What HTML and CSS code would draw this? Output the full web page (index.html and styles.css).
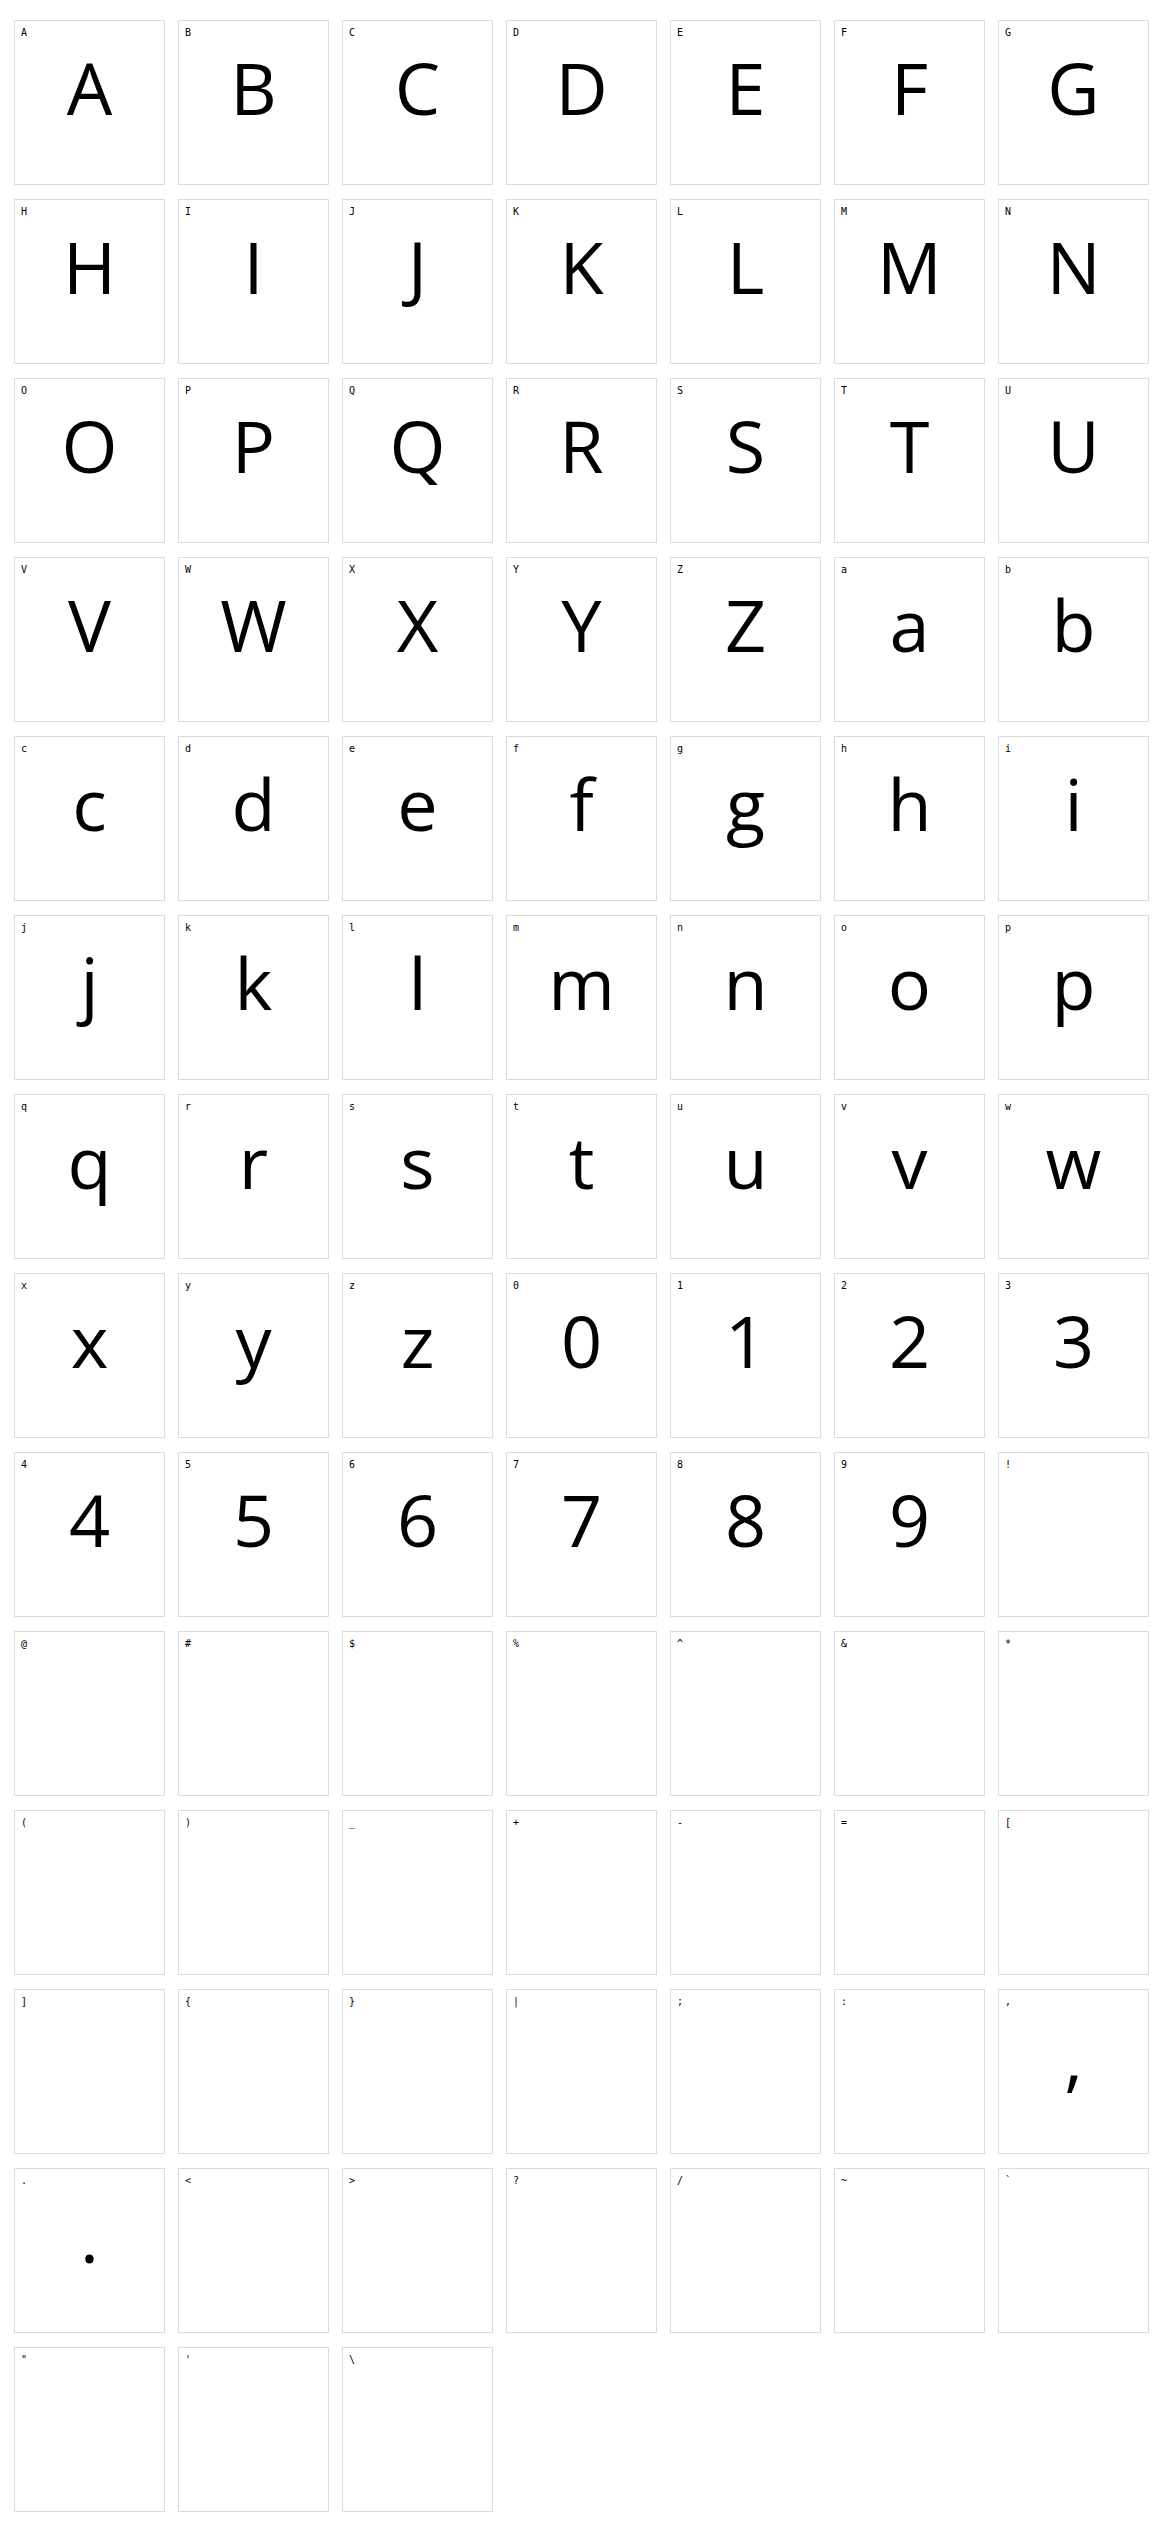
FILE: index.html
```html
<!DOCTYPE html>
<html lang="en">
<head>
    <meta charset="UTF-8">
    <meta name="viewport" content="width=device-width, initial-scale=1.0">
    <title>Character map</title>
    <link rel="stylesheet" href="styles.css">
</head>
<body>
    <div class="charmap" id="charmap"></div>

    <script>
        const chars = "ABCDEFGHIJKLMNOPQRSTUVWXYZabcdefghijklmnopqrstuvwxyz0123456789!@#$%^&*()_+-=[]{}|;:,.<>?/~`\"'\\";
        // the font only has letters, digits, comma and period
        const inFont = /[A-Za-z0-9,.]/;
        const charmap = document.getElementById("charmap");

        for (const ch of chars) {
            const cell = document.createElement("div");
            cell.className = "cell";

            const label = document.createElement("div");
            label.className = "cell-label";
            label.textContent = ch;

            const glyph = document.createElement("div");
            glyph.className = "cell-glyph";
            glyph.textContent = inFont.test(ch) ? ch : "";

            cell.appendChild(label);
            cell.appendChild(glyph);
            charmap.appendChild(cell);
        }
    </script>
</body>
</html>
```

FILE: styles.css
```css
body {
    margin: 0;
    padding: 0;
    background: #fff;
    color: #000;
    font-family: "Open Sans", sans-serif;
}

.charmap {
    display: grid;
    grid-template-columns: repeat(7, 151px);
    grid-auto-rows: 165px;
    column-gap: 13px;
    row-gap: 14px;
    padding: 20px 14px 28px;
}

.cell {
    box-sizing: border-box;
    border: 1px solid #dcdcdc;
    padding: 6px 6px 0;
    overflow: hidden;
}

.cell-label {
    font-family: "DejaVu Sans Mono", monospace;
    font-size: 10px;
    line-height: 12px;
    height: 12px;
}

.cell-glyph {
    margin-top: 12px;
    height: 72px;
    font-size: 72px;
    line-height: 72px;
    text-align: center;
}
```
